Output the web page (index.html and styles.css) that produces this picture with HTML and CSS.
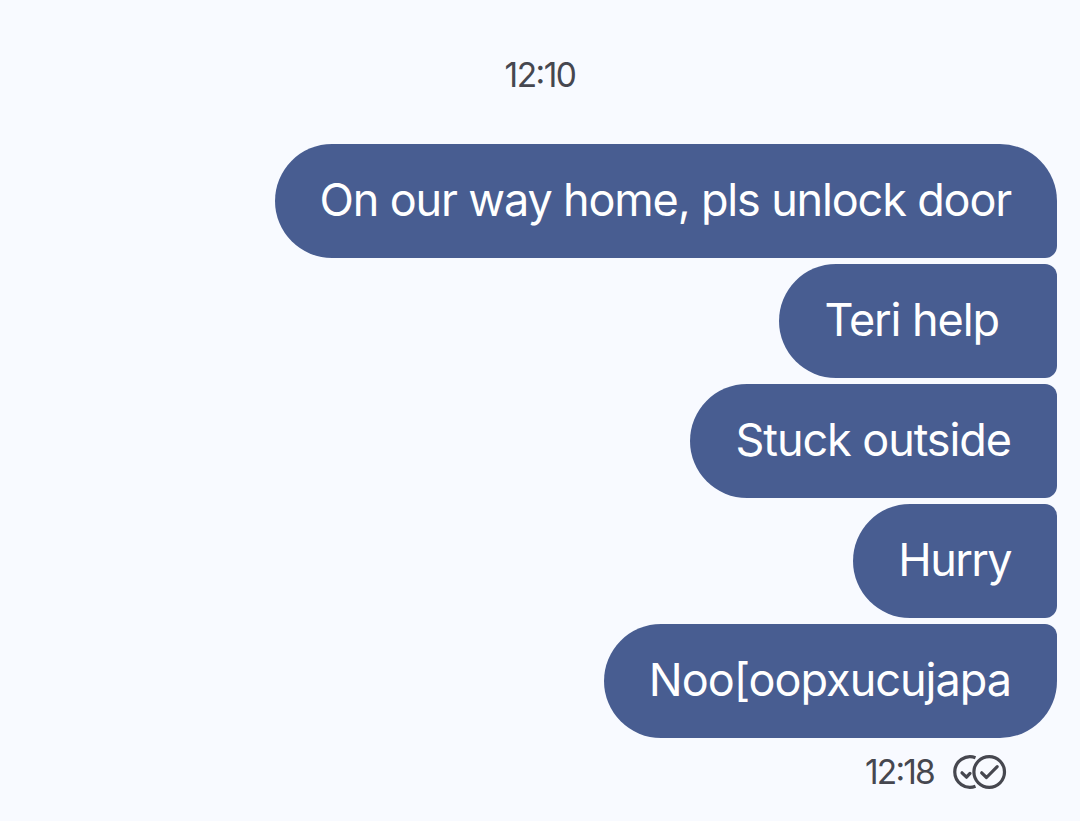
FILE: index.html
```
<!DOCTYPE html>
<html lang="en">
<head>
    <meta charset="UTF-8">
    <meta name="viewport" content="width=device-width, initial-scale=1.0">
    <title>Messages</title>
    <link rel="stylesheet" href="styles.css">
</head>
<body>
    <main class="chat">
        <time class="timestamp">12:10</time>

        <div class="messages">
            <div class="bubble first">On our way home, pls unlock door</div>
            <div class="bubble trailing">Teri help</div>
            <div class="bubble">Stuck outside</div>
            <div class="bubble short">Hurry</div>
            <div class="bubble last">Noo[oopxucujapa</div>
        </div>

        <div class="status">
            <time class="sent">12:18</time>
            <svg class="read" viewBox="0 0 54 36" width="54" height="36" aria-label="Read">
                <path d="M22.5 3.7A15.3 15.3 0 1 0 22.5 32.3"/>
                <path class="check" d="M9 18.8l4.5 4.4 3.5-3.8"/>
                <circle cx="36.2" cy="18" r="15.3"/>
                <path class="check" d="M28.7 18.8l4.8 4.7 10.7-10.9"/>
            </svg>
        </div>
    </main>
</body>
</html>
```
FILE: styles.css
```
body {
    margin: 0;
    background: #f8faff;
    font-family: 'Inter', sans-serif;
    font-weight: 370;
}

.chat {
    box-sizing: border-box;
    height: 821px;
    padding: 55px 23px 0;
    overflow: hidden;
}

.timestamp {
    display: block;
    height: 89px;
    line-height: 41px;
    font-size: 33.5px;
    letter-spacing: -1.5px;
    font-feature-settings: "calt", "case";
    text-align: center;
    color: #46474f;
}

.messages {
    display: flex;
    flex-direction: column;
    align-items: flex-end;
    gap: 6px;
}

.bubble {
    box-sizing: border-box;
    height: 114px;
    padding: 0 46px 0 45px;
    line-height: 111px;
    font-size: 45px;
    letter-spacing: -1.08px;
    color: #fff;
    background: #485d91;
    border-radius: 57px 12px 12px 57px;
    white-space: nowrap;
}

.first {
    border-top-right-radius: 57px;
    letter-spacing: -1.16px;
}

.last {
    border-bottom-right-radius: 57px;
    letter-spacing: -1px;
}

.trailing {
    padding-right: 58px;
}

.short {
    letter-spacing: -1.6px;
}

.status {
    display: flex;
    justify-content: flex-end;
    align-items: center;
    gap: 19px;
    height: 40px;
    margin-top: 14px;
    padding-right: 50px;
    font-size: 33.5px;
    letter-spacing: -1.8px;
    font-feature-settings: "calt", "case";
    color: #46474f;
}

.read {
    fill: none;
    stroke: #46474f;
    stroke-width: 3.2;
}

.check {
    stroke-linecap: round;
    stroke-linejoin: round;
}
```
